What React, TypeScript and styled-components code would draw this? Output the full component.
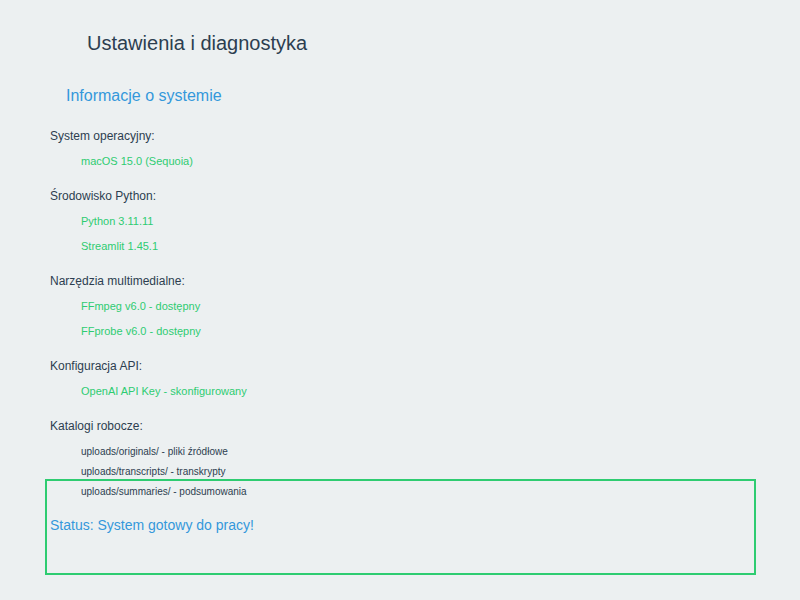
import React from "react";
import styled, { createGlobalStyle } from "styled-components";

const Global = createGlobalStyle`
  html, body { margin: 0; padding: 0; background: #ecf0f1; }
  body { font-family: "Liberation Sans", Arial, sans-serif; }
`;

const Page = styled.div`
  width: 800px;
  height: 600px;
  box-sizing: border-box;
  padding-top: 30px;
  display: flex;
  flex-direction: column;
`;

const Title = styled.h1`
  margin: 0 0 0 87px;
  font-size: 20px;
  font-weight: normal;
  line-height: 26px;
  color: #2c3e50;
`;

const SectionHeading = styled.h2`
  margin: 30px 0 0 66px;
  font-size: 16px;
  font-weight: normal;
  line-height: 20px;
  color: #3498db;
`;

const Groups = styled.div`
  margin: 17.5px 0 0 50px;
  display: flex;
  flex-direction: column;
  gap: 10px;
`;

const Group = styled.div`
  display: flex;
  flex-direction: column;
`;

const Label = styled.div`
  font-size: 12px;
  line-height: 25px;
  color: #2c3e50;
`;

const Item = styled.div`
  padding-left: 31px;
  font-size: 11px;
  line-height: 25px;
  color: #2ecc71;
`;

const DirList = styled.div`
  padding-top: 3.5px;
  display: flex;
  flex-direction: column;
`;

const Dir = styled.div`
  padding-left: 31px;
  font-size: 10px;
  line-height: 20px;
  color: #2c3e50;
`;

const StatusBox = styled.div`
  margin: -23px 0 0 45px;
  width: 711px;
  height: 96px;
  box-sizing: border-box;
  border: 2px solid #2ecc71;
  padding: 36px 0 0 3px;
  position: relative;
`;

const StatusText = styled.div`
  font-size: 14px;
  line-height: 17px;
  color: #3498db;
`;

const groups: { label: string; items: string[] }[] = [
  { label: "System operacyjny:", items: ["macOS 15.0 (Sequoia)"] },
  { label: "Środowisko Python:", items: ["Python 3.11.11", "Streamlit 1.45.1"] },
  {
    label: "Narzędzia multimedialne:",
    items: ["FFmpeg v6.0 - dostępny", "FFprobe v6.0 - dostępny"],
  },
  { label: "Konfiguracja API:", items: ["OpenAI API Key - skonfigurowany"] },
];

const dirs = [
  "uploads/originals/ - pliki źródłowe",
  "uploads/transcripts/ - transkrypty",
  "uploads/summaries/ - podsumowania",
];

export default function App() {
  return (
    <>
      <Global />
      <Page>
        <Title>Ustawienia i diagnostyka</Title>
        <SectionHeading>Informacje o systemie</SectionHeading>
        <Groups>
          {groups.map((g) => (
            <Group key={g.label}>
              <Label>{g.label}</Label>
              {g.items.map((it) => (
                <Item key={it}>{it}</Item>
              ))}
            </Group>
          ))}
          <Group>
            <Label>Katalogi robocze:</Label>
            <DirList>
              {dirs.map((d) => (
                <Dir key={d}>{d}</Dir>
              ))}
            </DirList>
          </Group>
        </Groups>
        <StatusBox>
          <StatusText>Status: System gotowy do pracy!</StatusText>
        </StatusBox>
      </Page>
    </>
  );
}
